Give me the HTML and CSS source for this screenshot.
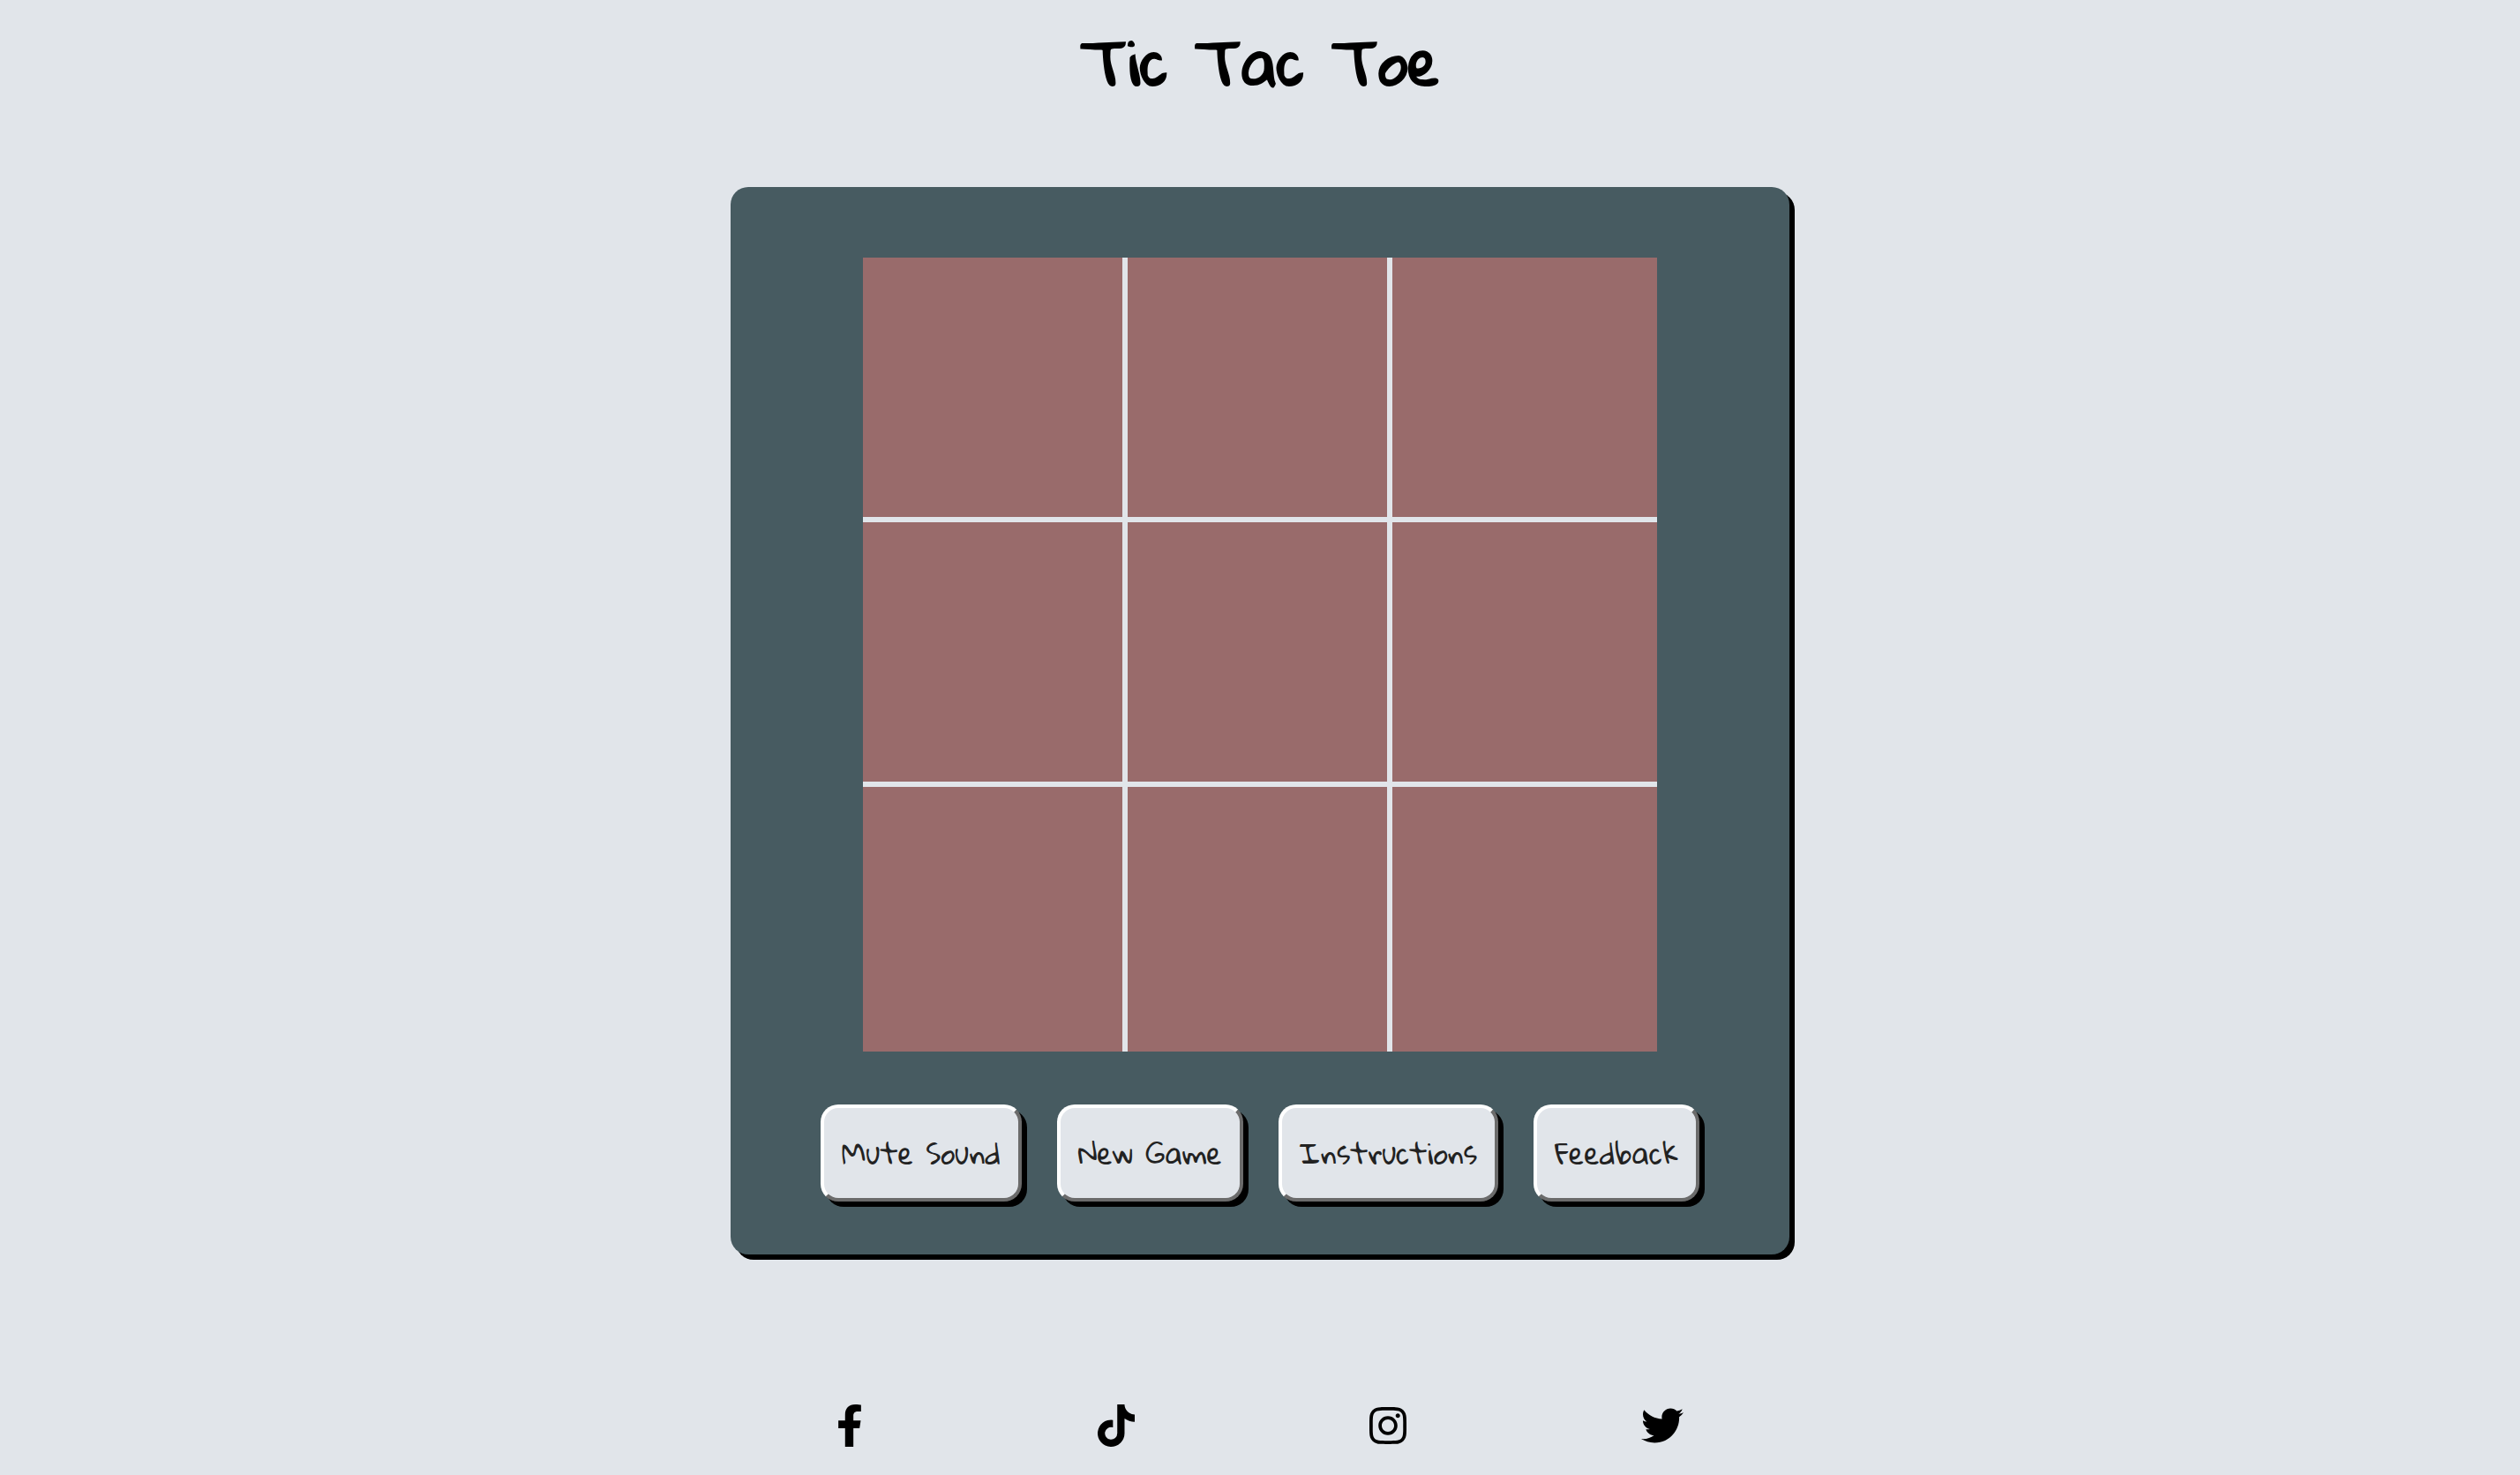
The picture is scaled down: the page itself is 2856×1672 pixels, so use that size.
FILE: index.html
```html
<!DOCTYPE html>
<html lang="en">
<head>
  <meta charset="utf-8">
  <meta name="viewport" content="width=device-width, initial-scale=1">
  <title>Tic Tac Toe</title>
  <link rel="stylesheet" href="styles.css">
</head>
<body>
  <header>
    <h1 class="title">Tic Tac Toe</h1>
  </header>
  <main class="game">
    <div class="board">
      <div class="cell"></div><div class="cell"></div><div class="cell"></div>
      <div class="cell"></div><div class="cell"></div><div class="cell"></div>
      <div class="cell"></div><div class="cell"></div><div class="cell"></div>
    </div>
    <div class="controls">
      <button type="button" class="btn btn-mute">Mute Sound</button>
      <button type="button" class="btn btn-new">New Game</button>
      <button type="button" class="btn btn-help">Instructions</button>
      <button type="button" class="btn btn-feedback">Feedback</button>
    </div>
  </main>
  <footer class="social">
    <a href="#" aria-label="Facebook"><svg viewBox="0 0 320 512"><path d="M279.14 288l14.22-92.66h-88.91v-60.13c0-25.35 12.42-50.06 52.24-50.06h40.42V6.26S260.43 0 225.36 0c-73.22 0-121.08 44.38-121.08 124.72v70.62H22.89V288h81.39v224h100.17V288z"/></svg></a>
    <a href="#" aria-label="TikTok"><svg viewBox="0 0 448 512"><path d="M448,209.91a210.06,210.06,0,0,1-122.77-39.25V349.38A162.55,162.55,0,1,1,185,188.31V278.2a74.62,74.62,0,1,0,52.23,71.18V0l88,0a121.18,121.18,0,0,0,1.86,22.17h0A122.18,122.18,0,0,0,381,102.39a121.43,121.43,0,0,0,67,20.14Z"/></svg></a>
    <a href="#" aria-label="Instagram"><svg viewBox="0 0 448 512"><path d="M224.1 141c-63.6 0-114.9 51.3-114.9 114.9s51.3 114.9 114.9 114.9S339 319.5 339 255.9 287.7 141 224.1 141zm0 189.6c-41.1 0-74.7-33.5-74.7-74.7s33.5-74.7 74.7-74.7 74.7 33.5 74.7 74.7-33.6 74.7-74.7 74.7zm146.4-194.3c0 14.9-12 26.8-26.8 26.8-14.9 0-26.8-12-26.8-26.8s12-26.8 26.8-26.8 26.8 12 26.8 26.8zm76.1 27.2c-1.7-35.9-9.9-67.7-36.2-93.9-26.2-26.2-58-34.4-93.9-36.2-37-2.1-147.9-2.1-184.9 0-35.8 1.7-67.6 9.9-93.9 36.1s-34.4 58-36.2 93.9c-2.1 37-2.1 147.9 0 184.9 1.7 35.9 9.9 67.7 36.2 93.9s58 34.4 93.9 36.2c37 2.1 147.9 2.1 184.9 0 35.9-1.7 67.7-9.9 93.9-36.2 26.2-26.2 34.4-58 36.2-93.9 2.1-37 2.1-147.8 0-184.8zM398.8 388c-7.8 19.6-22.9 34.7-42.6 42.6-29.5 11.7-99.5 9-132.1 9s-102.7 2.6-132.1-9c-19.6-7.8-34.7-22.9-42.6-42.6-11.7-29.5-9-99.5-9-132.1s-2.6-102.7 9-132.1c7.8-19.6 22.9-34.7 42.6-42.6 29.5-11.7 99.5-9 132.1-9s102.7-2.6 132.1 9c19.6 7.8 34.7 22.9 42.6 42.6 11.7 29.5 9 99.5 9 132.1s2.7 102.7-9 132.1z"/></svg></a>
    <a href="#" aria-label="Twitter"><svg viewBox="0 0 512 512"><path d="M459.37 151.716c.325 4.548.325 9.097.325 13.645 0 138.72-105.583 298.558-298.558 298.558-59.452 0-114.68-17.219-161.137-47.106 8.447.974 16.568 1.299 25.34 1.299 49.055 0 94.213-16.568 130.274-44.832-46.132-.975-84.792-31.188-98.112-72.772 6.498.974 12.995 1.624 19.818 1.624 9.421 0 18.843-1.3 27.614-3.573-48.081-9.747-84.143-51.98-84.143-102.985v-1.299c13.969 7.797 30.214 12.67 47.431 13.319-28.264-18.843-46.781-51.005-46.781-87.391 0-19.492 5.197-37.36 14.294-52.954 51.655 63.675 129.3 105.258 216.365 109.807-1.624-7.797-2.599-15.918-2.599-24.04 0-57.828 46.782-104.934 104.934-104.934 30.213 0 57.502 12.67 76.67 33.137 23.715-4.548 46.456-13.32 66.599-25.34-7.798 24.366-24.366 44.833-46.132 57.827 21.117-2.273 41.584-8.122 60.426-16.243-14.292 20.791-32.161 39.308-52.628 54.253z"/></svg></a>
  </footer>
</body>
</html>
```
FILE: styles.css
```css
* {
  box-sizing: border-box;
}

body {
  margin: 0;
  min-height: 100vh;
  display: flex;
  flex-direction: column;
  align-items: center;
  padding: 22px 0 32px;
  background: #e1e5ea;
  color: #000;
  font-family: "Gloria Hallelujah", "Comic Neue", Lato, cursive;
}

.title {
  margin: 0 0 94px;
  font-size: 67px;
  line-height: 96px;
  font-weight: 700;
}

.game {
  width: 100%;
  max-width: 1200px;
  padding: 80px 0 60px;
  display: flex;
  flex-direction: column;
  align-items: center;
  gap: 60px;
  background: #475b61;
  border-radius: 20px;
  box-shadow: 6px 6px #000;
}

.board {
  width: 75%;
  aspect-ratio: 1;
  display: grid;
  grid-template: repeat(3, 1fr) / repeat(3, 1fr);
}

.cell {
  background: #996b6b;
  border: 0 solid #e1e5ea;
  border-width: 0 6px 6px 0;
}

.cell:nth-child(3n) {
  border-right-width: 0;
}

.cell:nth-child(n + 7) {
  border-bottom-width: 0;
}

.controls {
  display: flex;
  flex-wrap: wrap;
  justify-content: center;
  gap: 40px;
}

.btn {
  height: 110px;
  padding: 0;
  border: 4px solid;
  border-color: #fff #6b6b6b #6b6b6b #fff;
  border-radius: 20px;
  box-shadow: 6px 6px #000;
  background: #e1e5ea;
  color: #222;
  font-family: inherit;
  font-size: 32px;
  line-height: 40px;
  white-space: nowrap;
  cursor: pointer;
}

.btn-mute {
  width: 228px;
}

.btn-new {
  width: 211px;
}

.btn-help {
  width: 249px;
}

.btn-feedback {
  width: 188px;
}

.social {
  width: 100%;
  max-width: 960px;
  margin-top: auto;
  display: flex;
  justify-content: space-between;
}

.social a {
  color: inherit;
}

.social svg {
  display: block;
  height: 48px;
  fill: currentColor;
}
```
